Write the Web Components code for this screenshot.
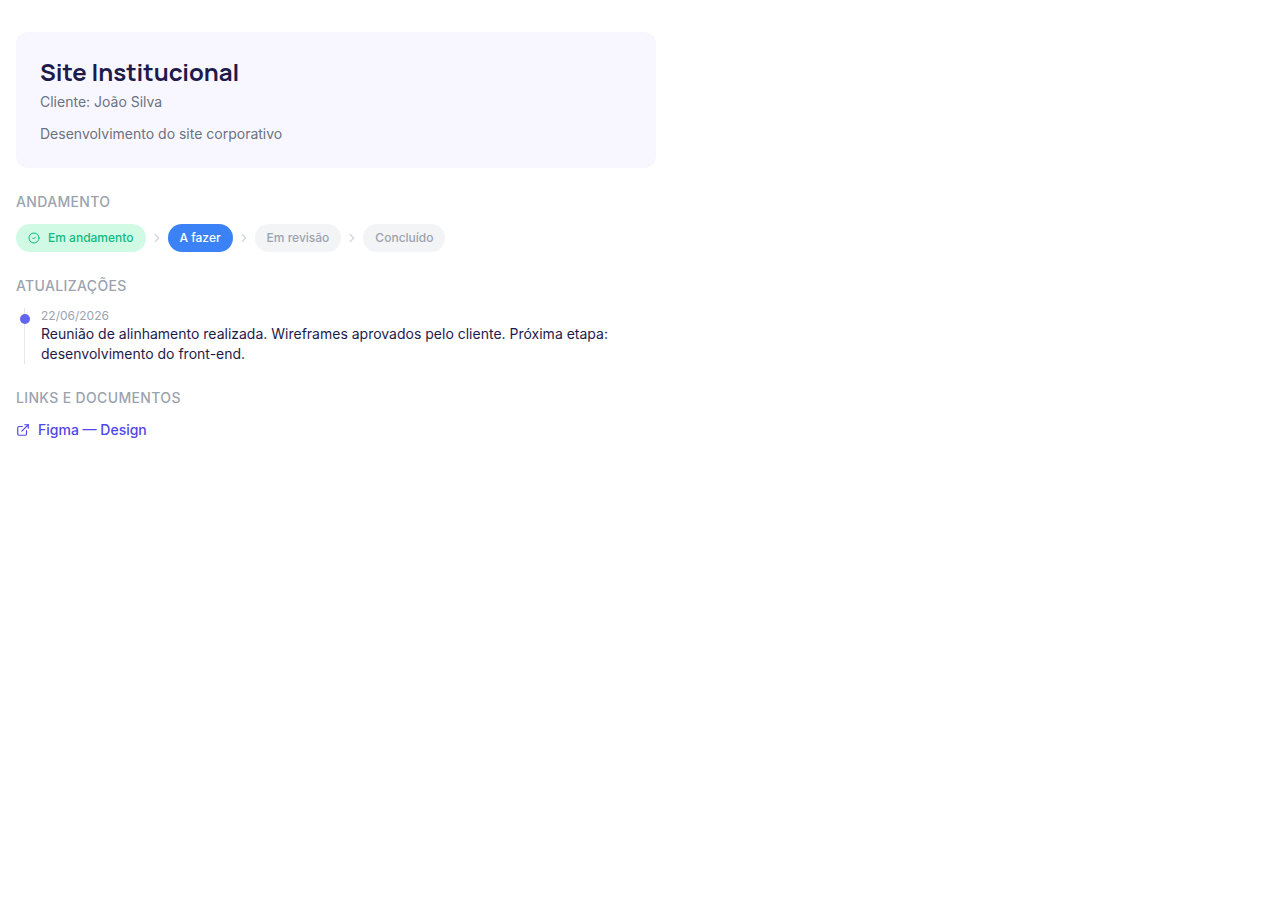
<!DOCTYPE html>
<html lang="pt-BR">
<head>
<meta charset="UTF-8">
<meta name="viewport" content="width=device-width, initial-scale=1">
<title>Site Institucional</title>
<style>
  body {
    margin: 0;
    background: #ffffff;
    color: #1e1b4b;
    font-family: Inter, "Liberation Sans", sans-serif;
    font-size: 14px;
    line-height: 20px;
  }
</style>
</head>
<body>
<project-page>
  <project-header client="João Silva">
    <span slot="title">Site Institucional</span>
    Desenvolvimento do site corporativo
  </project-header>

  <page-section heading="Andamento">
    <status-steps>
      <status-step state="done">Em andamento</status-step>
      <status-step state="current">A fazer</status-step>
      <status-step>Em revisão</status-step>
      <status-step>Concluído</status-step>
    </status-steps>
  </page-section>

  <page-section heading="Atualizações">
    <update-item date="22/06/2026">Reunião de alinhamento realizada. Wireframes aprovados pelo cliente. Próxima etapa: desenvolvimento do front-end.</update-item>
  </page-section>

  <page-section heading="Links e documentos">
    <document-link href="#figma">Figma — Design</document-link>
  </page-section>
</project-page>

<script>
class ProjectPage extends HTMLElement {
  connectedCallback() {
    this.attachShadow({ mode: 'open' });
    this.shadowRoot.innerHTML = `
      <style>
        :host {
          display: block;
          max-width: 640px;
          padding: 32px 16px;
        }

        main {
          display: flex;
          flex-direction: column;
          gap: 24px;
        }
      </style>
      <main><slot></slot></main>
    `;
  }
}

class ProjectHeader extends HTMLElement {
  connectedCallback() {
    this.attachShadow({ mode: 'open' });
    this.shadowRoot.innerHTML = `
      <style>
        :host {
          display: block;
          padding: 24px;
          border-radius: 12px;
          background: #f8f7ff;
        }

        h1 {
          margin: 0 0 4px;
          font-family: Manrope, Inter, sans-serif;
          font-size: 24px;
          font-weight: 700;
          line-height: 32px;
        }

        p {
          margin: 0;
          color: #6b7280;
        }

        .description {
          margin-top: 12px;
        }
      </style>
      <header>
        <h1><slot name="title"></slot></h1>
        <p>Cliente: ${this.getAttribute('client')}</p>
        <p class="description"><slot></slot></p>
      </header>
    `;
  }
}

class PageSection extends HTMLElement {
  connectedCallback() {
    this.attachShadow({ mode: 'open' });
    this.shadowRoot.innerHTML = `
      <style>
        :host {
          display: block;
        }

        h2 {
          margin: 0 0 12px;
          color: #9ca3af;
          font-size: 14px;
          font-weight: 500;
          line-height: 20px;
          text-transform: uppercase;
          letter-spacing: 0.025em;
        }
      </style>
      <section>
        <h2>${this.getAttribute('heading')}</h2>
        <slot></slot>
      </section>
    `;
  }
}

class StatusSteps extends HTMLElement {
  connectedCallback() {
    this.attachShadow({ mode: 'open' });
    this.setAttribute('role', 'list');
    this.shadowRoot.innerHTML = `
      <style>
        :host {
          display: flex;
          flex-wrap: wrap;
          align-items: center;
          gap: 4px;
        }
      </style>
      <slot></slot>
    `;
  }
}

class StatusStep extends HTMLElement {
  connectedCallback() {
    this.attachShadow({ mode: 'open' });
    this.setAttribute('role', 'listitem');
    this.shadowRoot.innerHTML = `
      <style>
        :host {
          display: flex;
          align-items: center;
          gap: 4px;
          font-size: 12px;
          font-weight: 500;
          line-height: 16px;
        }

        .pill {
          display: flex;
          align-items: center;
          gap: 8px;
          padding: 6px 12px;
          border-radius: 14px;
          background: #f3f4f6;
          color: #9ca3af;
        }

        :host([state="done"]) .pill {
          background: #d1fae5;
          color: #10b981;
        }

        :host([state="current"]) .pill {
          background: #3b82f6;
          color: white;
        }

        svg {
          display: block;
          fill: none;
          stroke: currentColor;
          stroke-width: 2;
          stroke-linecap: round;
          stroke-linejoin: round;
        }

        .check {
          display: none;
        }

        :host([state="done"]) .check {
          display: block;
        }

        .chevron {
          color: #d1d5db;
        }

        :host(:last-child) .chevron {
          display: none;
        }
      </style>
      <span class="pill">
        <svg class="check" width="12" height="12" viewBox="0 0 24 24" aria-hidden="true">
          <circle cx="12" cy="12" r="10"/>
          <path d="m9 12 2 2 4-4"/>
        </svg>
        <slot></slot>
      </span>
      <svg class="chevron" width="14" height="14" viewBox="0 0 24 24" aria-hidden="true">
        <path d="m9 18 6-6-6-6"/>
      </svg>
    `;
  }
}

class UpdateItem extends HTMLElement {
  connectedCallback() {
    this.attachShadow({ mode: 'open' });
    this.shadowRoot.innerHTML = `
      <style>
        :host {
          display: block;
          position: relative;
          margin-left: 8px;
          padding-left: 16px;
          border-left: 1px solid #e5e7eb;
        }

        /* timeline dot, sits over the line */
        :host::before {
          content: "";
          position: absolute;
          top: 6px;
          left: -5px;
          width: 10px;
          height: 10px;
          border-radius: 50%;
          background: #6366f1;
        }

        time {
          display: block;
          color: #9ca3af;
          font-size: 12px;
          line-height: 16px;
        }

        p {
          margin: 0;
        }
      </style>
      <article>
        <time>${this.getAttribute('date')}</time>
        <p><slot></slot></p>
      </article>
    `;
  }
}

class DocumentLink extends HTMLElement {
  connectedCallback() {
    this.attachShadow({ mode: 'open' });
    this.shadowRoot.innerHTML = `
      <style>
        :host {
          display: flex;
        }

        a {
          display: flex;
          align-items: center;
          gap: 8px;
          color: #4f46e5;
          font-weight: 500;
          text-decoration: none;
        }

        a:hover {
          text-decoration: underline;
        }
      </style>
      <a href="${this.getAttribute('href')}">
        <svg width="14" height="14" viewBox="0 0 24 24" fill="none" stroke="currentColor" stroke-width="2" stroke-linecap="round" stroke-linejoin="round" aria-hidden="true">
          <path d="M15 3h6v6"/>
          <path d="M10 14 21 3"/>
          <path d="M18 13v6a2 2 0 0 1-2 2H5a2 2 0 0 1-2-2V8a2 2 0 0 1 2-2h6"/>
        </svg>
        <slot></slot>
      </a>
    `;
  }
}

customElements.define('project-page', ProjectPage);
customElements.define('project-header', ProjectHeader);
customElements.define('page-section', PageSection);
customElements.define('status-steps', StatusSteps);
customElements.define('status-step', StatusStep);
customElements.define('update-item', UpdateItem);
customElements.define('document-link', DocumentLink);
</script>
</body>
</html>
